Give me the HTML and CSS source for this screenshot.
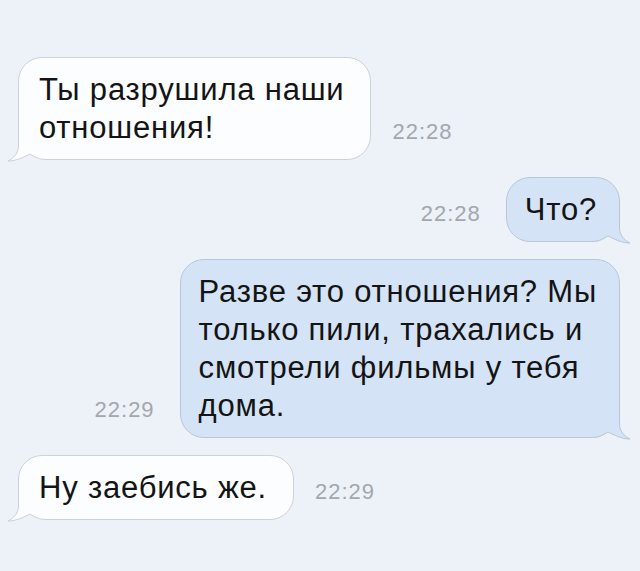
FILE: index.html
```html
<!DOCTYPE html>
<html lang="ru">
	<head>
		<meta charset="utf-8">
		<title>Сообщения</title>
		<link rel="stylesheet" href="styles.css">
	</head>
	<body>
		<div id="chat">
			<div class="row in">
				<div class="bubble">
					<svg class="tail" viewBox="0 0 44 36" width="44" height="36"><path class="tail-cut" d="M2,35 C10,35 18,31 24,28 C29,31 33,34 40,34 L40,36 L2,36 Z"/><path class="tail-body" d="M12.5,4 L12.5,20 C12.5,27 8,32 2,35 C10,35 18,31 24,28 C29,31 33,34 40,34 L40,4 Z"/><path class="tail-line" d="M12.5,4 L12.5,20 C12.5,27 8,32 2,35 C10,35 18,31 24,28 C29,31 33,33.5 40,33.5"/></svg>
					<span class="text">Ты разрушила наши<br>отношения!</span>
				</div>
				<span class="time">22:28</span>
			</div>
			<div class="row out">
				<span class="time">22:28</span>
				<div class="bubble">
					<svg class="tail" viewBox="0 0 44 36" width="44" height="36"><path class="tail-cut" d="M2,35 C10,35 18,31 24,28 C29,31 33,34 40,34 L40,36 L2,36 Z"/><path class="tail-body" d="M12.5,4 L12.5,20 C12.5,27 8,32 2,35 C10,35 18,31 24,28 C29,31 33,34 40,34 L40,4 Z"/><path class="tail-line" d="M12.5,4 L12.5,20 C12.5,27 8,32 2,35 C10,35 18,31 24,28 C29,31 33,33.5 40,33.5"/></svg>
					<span class="text">Что?</span>
				</div>
			</div>
			<div class="row out">
				<span class="time">22:29</span>
				<div class="bubble">
					<svg class="tail" viewBox="0 0 44 36" width="44" height="36"><path class="tail-cut" d="M2,35 C10,35 18,31 24,28 C29,31 33,34 40,34 L40,36 L2,36 Z"/><path class="tail-body" d="M12.5,4 L12.5,20 C12.5,27 8,32 2,35 C10,35 18,31 24,28 C29,31 33,34 40,34 L40,4 Z"/><path class="tail-line" d="M12.5,4 L12.5,20 C12.5,27 8,32 2,35 C10,35 18,31 24,28 C29,31 33,33.5 40,33.5"/></svg>
					<span class="text">Разве это отношения? Мы<br>только пили, трахались и<br>смотрели фильмы у тебя<br>дома.</span>
				</div>
			</div>
			<div class="row in">
				<div class="bubble">
					<svg class="tail" viewBox="0 0 44 36" width="44" height="36"><path class="tail-cut" d="M2,35 C10,35 18,31 24,28 C29,31 33,34 40,34 L40,36 L2,36 Z"/><path class="tail-body" d="M12.5,4 L12.5,20 C12.5,27 8,32 2,35 C10,35 18,31 24,28 C29,31 33,34 40,34 L40,4 Z"/><path class="tail-line" d="M12.5,4 L12.5,20 C12.5,27 8,32 2,35 C10,35 18,31 24,28 C29,31 33,33.5 40,33.5"/></svg>
					<span class="text">Ну заебись же.</span>
				</div>
				<span class="time">22:29</span>
			</div>
		</div>
	</body>
</html>
```

FILE: styles.css
```css
:root {
	--page-color: #edf1f8;
	--font-color: #141414;
	--time-color: #a3a7ad;
	--in-background: #fcfdfe;
	--in-border: #cdd1d8;
	--out-background: #d5e3f6;
	--out-border: #b8c6da;
}
body {
	margin: 0;
	background-color: var(--page-color);
	color: var(--font-color);
	font-family: "Liberation Sans", Arial, sans-serif;
}
#chat {
	display: flex;
	flex-direction: column;
	gap: 17px;
	padding: 57px 20px 40px 18px;
}
.row {
	display: flex;
	align-items: flex-end;
}
.row.in {
	gap: 21px;
}
.row.out {
	justify-content: flex-end;
	gap: 25px;
}
.bubble {
	--bubble-bg: var(--in-background);
	--bubble-border: var(--in-border);
	position: relative;
	padding: 13px 26px 12px 20px;
	font-size: 31px;
	line-height: 38px;
	letter-spacing: 0.8px;
	background: var(--bubble-bg);
	border: 1px solid var(--bubble-border);
	border-radius: 24px;
}
.out .bubble {
	--bubble-bg: var(--out-background);
	--bubble-border: var(--out-border);
	padding: 13px 22px 12px 18px;
}
.text {
	position: relative;
}
.tail {
	position: absolute;
	left: -13px;
	bottom: -3px;
}
.out .tail {
	left: auto;
	right: -13px;
	transform: scaleX(-1);
}
.tail-cut {
	fill: var(--page-color);
}
.tail-body {
	fill: var(--bubble-bg);
}
.tail-line {
	fill: none;
	stroke: var(--bubble-border);
	stroke-width: 1;
}
.time {
	font-size: 22px;
	line-height: 22px;
	letter-spacing: 1px;
	color: var(--time-color);
	margin-bottom: 17px;
}
```
